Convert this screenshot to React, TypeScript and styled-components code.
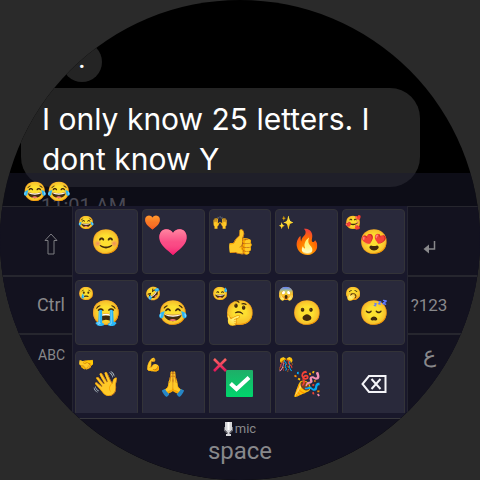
import React from "react";
import styled, { createGlobalStyle } from "styled-components";

const GlobalStyle = createGlobalStyle`
  * { box-sizing: border-box; }
  body {
    margin: 0;
    background: #2a2a2a;
    font-family: Roboto, "Noto Sans", sans-serif;
  }
  button { font: inherit; color: inherit; padding: 0; margin: 0; cursor: pointer; }
`;

const Watch = styled.main`
  position: relative;
  width: 100%;
  aspect-ratio: 1;
  border-radius: 50%;
  overflow: hidden;
  background: #000;
`;

const Thread = styled.section`
  display: flex;
  flex-direction: column;
  align-items: flex-start;
  padding: 0 60px 0 21px;
`;

const ShortBubble = styled.p`
  margin: 42px 0 6px 41px;
  width: 40px;
  height: 40px;
  border-radius: 20px;
  background: #242424;
  color: #fff;
  font-size: 30px;
  line-height: 32px;
  text-align: center;
`;

const Bubble = styled.p`
  margin: 0;
  width: 100%;
  padding: 11px 16px 8px 21px;
  border-radius: 30px;
  background: #242424;
  color: #fff;
  font-family: Inter, sans-serif;
  font-size: 30px;
  line-height: 40px;
`;

const Time = styled.time`
  margin: 7px 0 0 20px;
  color: #77777a;
  font-size: 20px;
  line-height: 24px;
`;

const Keyboard = styled.section`
  position: absolute;
  inset: 173px 0 0;
  display: flex;
  flex-direction: column;
  color: #88888b;
`;

const Typed = styled.output`
  height: 33px;
  padding-left: 23px;
  background: rgba(26, 26, 46, 0.5);
  font-size: 19px;
  line-height: 37px;
`;

const KeyArea = styled.div`
  display: grid;
  grid-template-columns: 73px 1fr 73px;
  height: 212px;
  background: #19182b;
`;

const SideColumn = styled.div<{ $side: "left" | "right" }>`
  display: grid;
  grid-template-rows: 69px 58px 1fr;
  background: #13121f;
  border-${(p) => (p.$side === "left" ? "right" : "left")}: 1px solid #242430;
`;

const SideKey = styled.button<{ $side: "left" | "right"; $size?: number; $top?: boolean }>`
  display: flex;
  align-items: ${(p) => (p.$top ? "flex-start" : "center")};
  justify-content: ${(p) => (p.$side === "left" ? "flex-end" : "center")};
  padding: ${(p) => (p.$top ? "10px" : "0")} ${(p) => (p.$side === "left" ? "7px" : "30px")} 0 0;
  border: 0;
  border-top: 2px solid #26262e;
  background: transparent;
  font-size: ${(p) => p.$size ?? 18}px;
  line-height: 20px;

  &:first-child {
    border-top-width: 1px;
  }
`;

const ShiftIcon = styled.svg`
  margin: 5px 7px 0 0;
`;

const EnterIcon = styled.svg`
  margin-top: 12px;
`;

const EmojiGrid = styled.div`
  display: grid;
  grid-template-columns: repeat(5, 1fr);
  grid-auto-rows: 65px;
  gap: 6px 4px;
  height: 207px;
  padding: 3px 2px 0;
  overflow: hidden;
`;

const EmojiKey = styled.button`
  position: relative;
  display: grid;
  place-items: center;
  border: 1px solid #333338;
  border-radius: 4px;
  background: #29293b;
`;

const Main = styled.span`
  display: grid;
  font-size: 24px;
  line-height: 28px;
  color: #fff;
`;

const Alternate = styled.span`
  position: absolute;
  top: 5px;
  left: 2px;
  display: grid;
  font-size: 13px;
  line-height: 16px;
`;

const SpaceKey = styled.button`
  flex: 1;
  display: flex;
  flex-direction: column;
  align-items: center;
  border: 0;
  border-top: 1px solid #38383d;
  background: #13121f;
`;

const Mic = styled.span`
  display: flex;
  align-items: center;
  gap: 2px;
  padding-top: 1px;
  font-size: 13px;
  line-height: 17px;
`;

const SpaceLabel = styled.span`
  font-size: 24px;
  line-height: 28px;
`;

function Heart({ size, from, to }: { size: number; from: string; to: string }) {
  const id = `heart-${size}`;
  return (
    <svg width={size} height={size} viewBox="0 0 28 28" aria-hidden="true">
      <defs>
        <linearGradient id={id} x1="0" y1="0" x2="0" y2="1">
          <stop offset="0" stopColor={from} />
          <stop offset="0.500" stopColor={from} stopOpacity="0.500" />
          <stop offset="1" stopColor={to} />
        </linearGradient>
      </defs>
      <path
        fill={to}
        d="M14 5C12 1.500 8.500 0.700 5.500 1.600C1.500 2.800 0 6.500 0.400 10.500C1.200 17.500 8 21.500 14 27C20 21.500 26.800 17.500 27.600 10.500C28 6.500 26.500 2.800 22.500 1.600C19.500 0.700 16 1.500 14 5Z"
      />
      <path
        fill={`url(#${id})`}
        d="M14 5C12 1.500 8.500 0.700 5.500 1.600C1.500 2.800 0 6.500 0.400 10.500C1.200 17.500 8 21.500 14 27C20 21.500 26.800 17.500 27.600 10.500C28 6.500 26.500 2.800 22.500 1.600C19.500 0.700 16 1.500 14 5Z"
      />
    </svg>
  );
}

function Cross() {
  return (
    <svg width="16" height="16" viewBox="0 0 16 16" aria-hidden="true">
      <defs>
        <linearGradient id="cross" gradientUnits="userSpaceOnUse" x1="0" y1="1" x2="0" y2="15">
          <stop offset="0" stopColor="#ff6a62" />
          <stop offset="1" stopColor="#e0105a" />
        </linearGradient>
      </defs>
      <path d="M2 2L14 14M14 2L2 14" stroke="url(#cross)" strokeWidth="2.600" fill="none" />
    </svg>
  );
}

function Check() {
  return (
    <svg width="27" height="27" viewBox="0 0 27 27" aria-hidden="true">
      <defs>
        <linearGradient id="check" x1="0" y1="0" x2="0" y2="1">
          <stop offset="0" stopColor="#1fae68" />
          <stop offset="1" stopColor="#00d66c" />
        </linearGradient>
      </defs>
      <rect width="27" height="27" rx="1" fill="url(#check)" />
      <path d="M4.500 13.500L10.500 19L23 7.500" stroke="#fff" strokeWidth="4" fill="none" />
    </svg>
  );
}

function Backspace() {
  return (
    <svg width="26" height="20" viewBox="0 0 26 20" fill="none" stroke="#f4f4f8" strokeWidth="2" aria-hidden="true">
      <path d="M8 2H24.500V18H8L1.500 10Z" />
      <path d="M10.500 5L19.500 15M19.500 5L10.500 15" />
    </svg>
  );
}

type Glyph = React.ReactNode;
const keys: { name: string; main: Glyph; alt?: Glyph }[] = [
  { name: "Smile", main: "😊", alt: "😂" },
  { name: "Heart", main: <Heart size={28} from="#ff86a0" to="#f5146c" />, alt: <Heart size={15} from="#ff9a2e" to="#f4511e" /> },
  { name: "Thumbs up", main: "👍", alt: "🙌" },
  { name: "Fire", main: "🔥", alt: "✨" },
  { name: "Heart eyes", main: "😍", alt: "🥰" },
  { name: "Sob", main: "😭", alt: "😢" },
  { name: "Joy", main: "😂", alt: "🤣" },
  { name: "Thinking", main: "🤔", alt: "😅" },
  { name: "Surprised", main: "😮", alt: "😱" },
  { name: "Sleeping", main: "😴", alt: "🥱" },
  { name: "Wave", main: "👋", alt: "🤝" },
  { name: "Folded hands", main: "🙏", alt: "💪" },
  { name: "Check", main: <Check />, alt: <Cross /> },
  { name: "Party", main: "🎉", alt: "🎊" },
  { name: "Backspace", main: <Backspace /> },
];

export default function App() {
  return (
    <>
      <GlobalStyle />
      <Watch>
        <Thread>
          <ShortBubble>.</ShortBubble>
          <Bubble>I only know 25 letters. I dont know Y</Bubble>
          <Time>11:01 AM</Time>
        </Thread>
        <Keyboard>
          <Typed>😂😂</Typed>
          <KeyArea>
            <SideColumn $side="left">
              <SideKey $side="left" aria-label="Shift">
                <ShiftIcon width="14" height="22" viewBox="0 0 14 22" fill="none" stroke="#7c7c81" aria-hidden="true">
                  <path d="M7 1L13 7.500H10V21H4V7.500H1Z" />
                </ShiftIcon>
              </SideKey>
              <SideKey $side="left">Ctrl</SideKey>
              <SideKey $side="left" $size={14} $top>ABC</SideKey>
            </SideColumn>
            <EmojiGrid>
              {keys.map((k) => (
                <EmojiKey key={k.name} aria-label={k.name}>
                  {k.alt && <Alternate>{k.alt}</Alternate>}
                  <Main>{k.main}</Main>
                </EmojiKey>
              ))}
            </EmojiGrid>
            <SideColumn $side="right">
              <SideKey $side="right" aria-label="Enter">
                <EnterIcon width="13" height="14" viewBox="0 0 13 14" fill="none" stroke="#88888b" strokeWidth="1.500" aria-hidden="true">
                  <path d="M11.500 1V9H3" />
                  <path d="M6 4.500L0.500 9L6 13.500Z" fill="#88888b" stroke="none" />
                </EnterIcon>
              </SideKey>
              <SideKey $side="right" $size={17}>?123</SideKey>
              <SideKey $side="right" $size={22} $top lang="ar">ع</SideKey>
            </SideColumn>
          </KeyArea>
          <SpaceKey>
            <Mic>
              <svg width="9" height="15" viewBox="0 0 9 15" aria-hidden="true">
                <path d="M1 1H8V9L6 11H3L1 9Z" fill="#d4d4d8" />
                <path d="M4.500 1V9" stroke="#fff" strokeWidth="2" />
                <path d="M0.500 6V10L3 12H6L8.500 10V6" fill="none" stroke="#77777c" />
                <path d="M4.500 11V14M2 14H7" stroke="#d4d4d8" strokeWidth="2" />
              </svg>
              mic
            </Mic>
            <SpaceLabel>space</SpaceLabel>
          </SpaceKey>
        </Keyboard>
      </Watch>
    </>
  );
}
